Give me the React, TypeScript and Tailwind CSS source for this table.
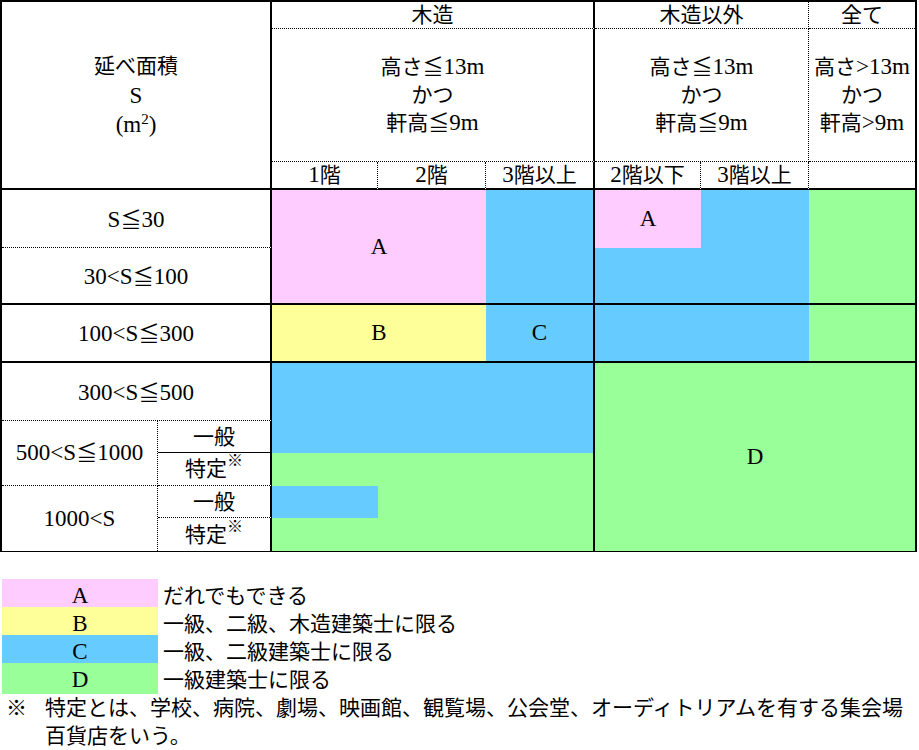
const PINK = "bg-[#ffccff]";
const YELLOW = "bg-[#ffff99]";
const BLUE = "bg-[#66ccff]";
const GREEN = "bg-[#99ff99]";

function T({ s }: { s: string }) {
  const parts = s.split(/([\x20-\x7e]+)/).filter(Boolean);
  return (
    <>
      {parts.map((p, i) =>
        /^[\x20-\x7e]+$/.test(p) ? (
          <span key={i} className="text-[23px]">
            {p}
          </span>
        ) : (
          <span key={i}>{p}</span>
        ),
      )}
    </>
  );
}

function Cell({ className = "", children }: { className?: string; children?: React.ReactNode }) {
  return (
    <div className={`flex items-center justify-center text-center border-black ${className}`}>
      {children}
    </div>
  );
}

function Height({ op }: { op: string }) {
  return (
    <>
      <span>
        <T s={`高さ${op}13m`} />
      </span>
      <span>かつ</span>
      <span>
        <T s={`軒高${op}9m`} />
      </span>
    </>
  );
}

const legend = [
  { key: "A", color: PINK, text: "だれでもできる" },
  { key: "B", color: YELLOW, text: "一級、二級、木造建築士に限る" },
  { key: "C", color: BLUE, text: "一級、二級建築士に限る" },
  { key: "D", color: GREEN, text: "一級建築士に限る" },
];

export default function App() {
  return (
    <div className="w-[919px] h-[750px] bg-white text-black text-[21px] leading-[28px] font-['Liberation_Serif','Noto_Sans_CJK_JP',serif]">
      <div className="w-[917px] border-2 border-b border-black grid grid-cols-[156px_114px_106px_108px_109px_106px_108px_106px] grid-rows-[27px_133px_28px_58px_57px_58px_58px_32px_33px_32px_33px]">
        {/* header */}
        <Cell className="col-start-1 col-span-2 row-start-1 row-span-3 border-r-2 border-b-2 flex-col leading-[29px]">
          <span>延べ面積</span>
          <span className="text-[23px]">S</span>
          <span className="text-[23px]">
            (m<sup className="text-[15px]">2</sup>)
          </span>
        </Cell>
        <Cell className="col-start-3 col-span-3 row-start-1 border-r-2 border-b [border-bottom-style:dotted]">木造</Cell>
        <Cell className="col-start-6 col-span-2 row-start-1 border-r border-b border-dotted">木造以外</Cell>
        <Cell className="col-start-8 row-start-1 border-b border-dotted">全て</Cell>

        <Cell className="col-start-3 col-span-3 row-start-2 border-r-2 border-b [border-bottom-style:dotted] flex-col">
          <Height op="≦" />
        </Cell>
        <Cell className="col-start-6 col-span-2 row-start-2 border-r border-b border-dotted flex-col">
          <Height op="≦" />
        </Cell>
        <Cell className="col-start-8 row-start-2 border-b border-dotted flex-col">
          <Height op=">" />
        </Cell>

        <Cell className="col-start-3 row-start-3 border-r border-b-2 [border-right-style:dotted]"><T s="1階" /></Cell>
        <Cell className="col-start-4 row-start-3 border-r border-b-2 [border-right-style:dotted]"><T s="2階" /></Cell>
        <Cell className="col-start-5 row-start-3 border-r-2 border-b-2"><T s="3階以上" /></Cell>
        <Cell className="col-start-6 row-start-3 border-r border-b-2 [border-right-style:dotted]"><T s="2階以下" /></Cell>
        <Cell className="col-start-7 row-start-3 border-r border-b-2 [border-right-style:dotted]"><T s="3階以上" /></Cell>
        <Cell className="col-start-8 row-start-3 border-b-2" />

        {/* row labels */}
        <Cell className="col-start-1 col-span-2 row-start-4 border-r-2 border-b [border-bottom-style:dotted] pt-[2px]"><T s="S≦30" /></Cell>
        <Cell className="col-start-1 col-span-2 row-start-5 border-r-2 border-b-2 pt-[2px]"><T s="30<S≦100" /></Cell>
        <Cell className="col-start-1 col-span-2 row-start-6 border-r-2 border-b-2 pt-[2px]"><T s="100<S≦300" /></Cell>
        <Cell className="col-start-1 col-span-2 row-start-7 border-r-2 border-b [border-bottom-style:dotted] pt-[2px]"><T s="300<S≦500" /></Cell>
        <Cell className="col-start-1 row-start-8 row-span-2 border-r border-b border-dotted"><T s="500<S≦1000" /></Cell>
        <Cell className="col-start-2 row-start-8 border-r-2 border-b">一般</Cell>
        <Cell className="col-start-2 row-start-9 border-r-2 border-b [border-bottom-style:dotted]">
          特定<sup className="text-[16px]">※</sup>
        </Cell>
        <Cell className="col-start-1 row-start-10 row-span-2 border-r border-dotted"><T s="1000<S" /></Cell>
        <Cell className="col-start-2 row-start-10 border-r-2 border-b [border-bottom-style:dotted]">一般</Cell>
        <Cell className="col-start-2 row-start-11 border-r-2">
          特定<sup className="text-[16px]">※</sup>
        </Cell>

        {/* colour areas */}
        <Cell className={`col-start-3 col-span-2 row-start-4 row-span-2 border-b-2 text-[23px] ${PINK}`}>A</Cell>
        <Cell className={`col-start-5 row-start-4 row-span-2 border-r-2 border-b-2 ${BLUE}`} />
        <Cell className={`col-start-6 row-start-4 text-[23px] ${PINK}`}>A</Cell>
        <Cell className={`col-start-7 row-start-4 ${BLUE}`} />
        <Cell className={`col-start-6 col-span-2 row-start-5 border-b-2 ${BLUE}`} />
        <Cell className={`col-start-8 row-start-4 row-span-2 border-b-2 ${GREEN}`} />

        <Cell className={`col-start-3 col-span-2 row-start-6 border-b-2 text-[23px] ${YELLOW}`}>B</Cell>
        <Cell className={`col-start-5 row-start-6 border-r-2 border-b-2 text-[23px] ${BLUE}`}>C</Cell>
        <Cell className={`col-start-6 col-span-2 row-start-6 border-b-2 ${BLUE}`} />
        <Cell className={`col-start-8 row-start-6 border-b-2 ${GREEN}`} />

        <Cell className={`col-start-3 col-span-3 row-start-7 row-span-2 border-r-2 ${BLUE}`} />
        <Cell className={`col-start-3 col-span-3 row-start-9 border-r-2 ${GREEN}`} />
        <Cell className={`col-start-3 row-start-10 ${BLUE}`} />
        <Cell className={`col-start-4 col-span-2 row-start-10 border-r-2 ${GREEN}`} />
        <Cell className={`col-start-3 col-span-3 row-start-11 border-r-2 ${GREEN}`} />
        <Cell className={`col-start-6 col-span-3 row-start-7 row-span-5 text-[23px] ${GREEN}`}>D</Cell>
      </div>

      {/* legend */}
      <div className="mt-[27px] ml-[2px]">
        {legend.map((l) => (
          <div key={l.key} className="grid grid-cols-[156px_1fr] h-[28px]">
            <div className={`text-center text-[23px] pt-[3px] ${l.color}`}>{l.key}</div>
            <div className="pl-[5px] pt-[3px] whitespace-nowrap">{l.text}</div>
          </div>
        ))}
        <div className="flex pt-[3px]">
          <div className="w-[43px] shrink-0 pl-[4px]">※</div>
          <div>
            <div className="whitespace-nowrap">特定とは、学校、病院、劇場、映画館、観覧場、公会堂、オーディトリアムを有する集会場</div>
            <div>百貨店をいう。</div>
          </div>
        </div>
      </div>
    </div>
  );
}
